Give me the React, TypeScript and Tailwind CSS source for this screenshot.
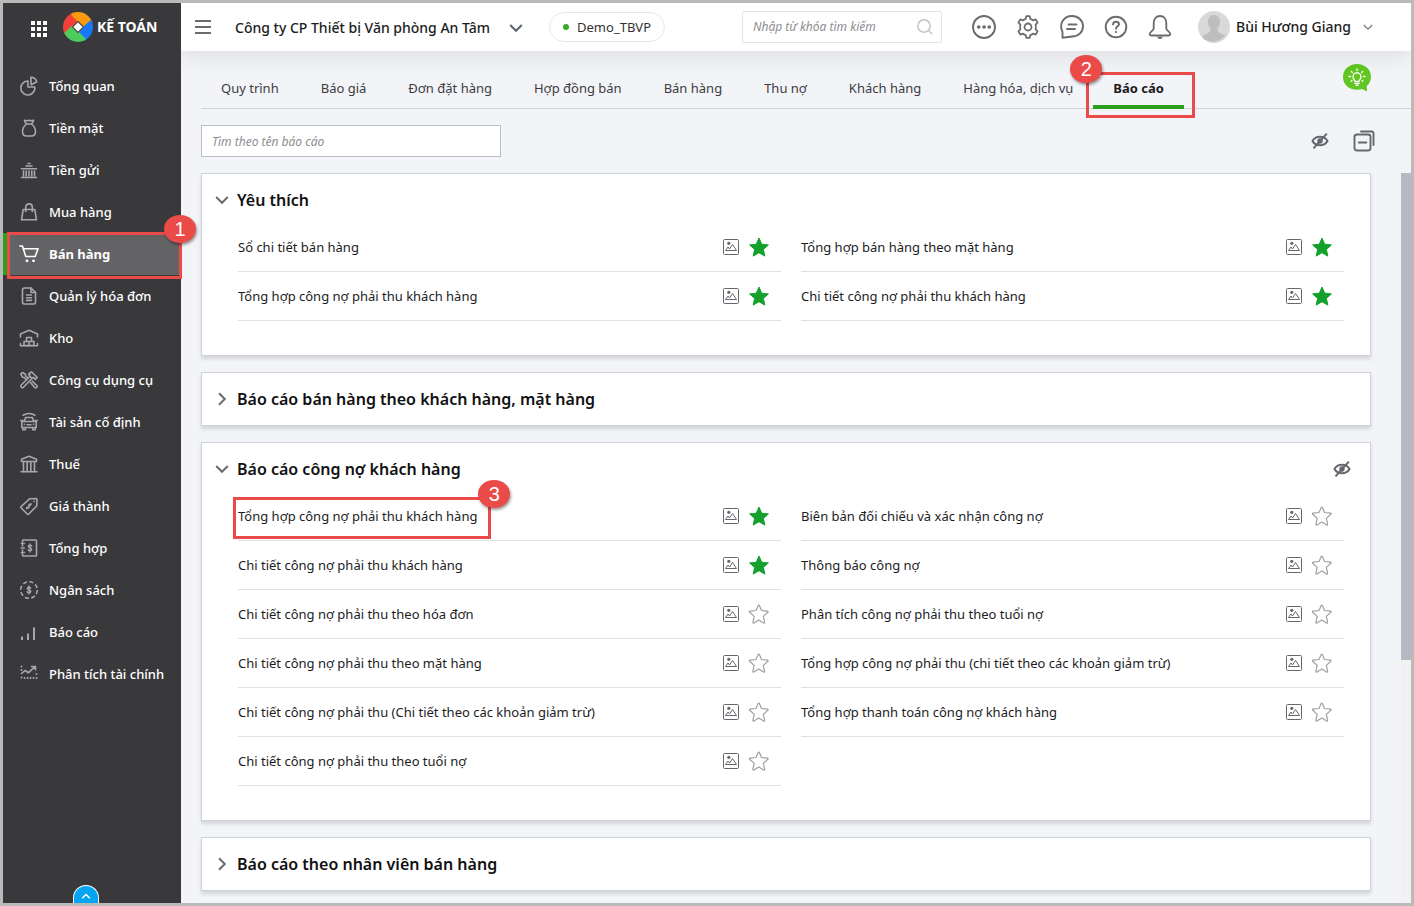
import type { ReactNode } from 'react';

const glyph = 'shrink-0 fill-none stroke-current';

function NavGlyph({ children }: { children: ReactNode }) {
  return (
    <svg viewBox="0 0 20 20" className={`${glyph} size-5`} strokeWidth="1.6" strokeLinecap="round" strokeLinejoin="round" aria-hidden="true">
      {children}
    </svg>
  );
}

function Chevron({ className, direction }: { className: string; direction: 'down' | 'right' | 'up' }) {
  const paths = { down: 'M2.2 5L8 10.800 13.800 5', right: 'M5 2.200L10.800 8 5 13.800', up: 'M3 11l5-5 5 5' };
  return (
    <svg viewBox="0 0 16 16" className={`${glyph} ${className}`} strokeWidth="2" aria-hidden="true">
      <path d={paths[direction]} />
    </svg>
  );
}

const dollar = 'M11.7 8.2c-.3-.8-.9-1-1.7-1-1 0-1.7.4-1.7 1.3 0 2 3.5 1 3.5 2.900 0 .9-.8 1.400-1.800 1.400-.9 0-1.600-.4-1.800-1.100M10 6v8';

const navItems: { label: string; icon: ReactNode }[] = [
  {
    label: 'Tổng quan',
    icon: (
      <>
        <path d="M9 5a7 7 0 1 0 6.700 8.500c.2-.8.200-1.700 0-2.500H9z" />
        <path d="M11.800 1.300a6.500 6.500 0 0 1 6 4.400l-5.600 3z" />
      </>
    ),
  },
  {
    label: 'Tiền mặt',
    icon: (
      <>
        <path d="M7.500 6C6 4.500 5.500 3.500 5.500 2.200c1.500.8 2.500.8 4.500 0 2 .8 3 .8 4.500 0 0 1.300-.5 2.300-2 3.800z" />
        <path d="M7.500 6C5 8 3.500 10.500 3.500 13.200c0 3 1.800 4.800 4 4.800h5c2.200 0 4-1.800 4-4.800 0-2.700-1.500-5.200-4-7.200" />
      </>
    ),
  },
  {
    label: 'Tiền gửi',
    icon: <path d="M9 3.500h2M7 6h6M2.500 8.800h15M4.500 11v5M7.200 11v5M10 11v5M12.800 11v5M15.500 11v5M2.500 17.500h15" />,
  },
  {
    label: 'Mua hàng',
    icon: (
      <>
        <path d="M4.200 7.500h11.600l1.700 10.300h-15z" />
        <path d="M6.700 9.500V5.200a3.300 3.300 0 0 1 6.600 0v4.300" />
      </>
    ),
  },
  {
    label: 'Bán hàng',
    icon: (
      <>
        <path d="M.8 2h2.600l3.400 10.500h9.400L19 4.800H4.300" />
        <circle cx="8" cy="16.800" r="1.400" fill="currentColor" stroke="none" />
        <circle cx="14.500" cy="16.800" r="1.400" fill="currentColor" stroke="none" />
      </>
    ),
  },
  {
    label: 'Quản lý hóa đơn',
    icon: (
      <>
        <path d="M12 2H5.200C4 2 3.500 2.700 3.500 3.700v12.600c0 1 .5 1.700 1.700 1.700h9.600c1.200 0 1.700-.7 1.700-1.700V6.500z" />
        <path d="M12 2v4.500h4.500M7.500 9h5M7.500 11.700h5M7.500 14.400h5" />
      </>
    ),
  },
  {
    label: 'Kho',
    icon: (
      <>
        <path d="M1.500 9V6L10 2.200 18.500 6v3M1.500 17.800h17M1.500 15.500v2.300M18.500 15.500v2.300" />
        <path d="M7.500 9.500h5v4h-5zM5 13.500h5v4H5zM10 13.500h5v4h-5z" />
      </>
    ),
  },
  {
    label: 'Công cụ dụng cụ',
    icon: (
      <>
        <path d="M13.200 8.300l-8.700 8.900a1.500 1.500 0 0 1-2.200-2.200l8.700-8.700M9.500 3.800l3-2 5.700 5.700-1.900 1.900-2-2-1.700.6-2.400-2.500.8-1.200z" />
        <path d="M7.500 10L5.200 7.500l-1.700-.3L1.800 4l1.500-1.500L6.200 4l.5 2 2.300 2.300M11.500 12.500l4.200 5c.7.7 1.400.7 2 0 .7-.6.7-1.300 0-2l-4.500-4.300" />
      </>
    ),
  },
  {
    label: 'Tài sản cố định',
    icon: (
      <>
        <path d="M4 3.200c4-2.200 8-2.200 12 0M5.200 9.500l1.400-4h6.800l1.400 4M2.800 9.500h14.400v6H2.800zM1.800 8.500h2M16.200 8.500h2" />
        <path d="M3.800 15.500v2.300h2.500v-2.300M13.700 15.500v2.300h2.500v-2.300M8 12.800h4M5.300 12.300h.2M14.500 12.300h.2" />
      </>
    ),
  },
  {
    label: 'Thuế',
    icon: (
      <>
        <path d="M2.500 7.500V5.200L10 2.200l7.500 3v2.300zM2 17.700h16" />
        <path d="M4.500 7.500v10M8.200 7.500v10M11.800 7.500v10M15.500 7.500v10" />
      </>
    ),
  },
  {
    label: 'Giá thành',
    icon: (
      <>
        <path d="M10.500 2.800l6.600-.2c.6 0 .9.300.9.900l-.3 6.500-8 8c-.5.500-1 .5-1.500 0l-6-6c-.5-.5-.5-1 0-1.500z" />
        <path d="M15 5.300v.1" />
        <path d="M12 8.800c-1-.9-1.700-.6-2.200 0-.7.900.9 1.700.3 2.700-.5.800-1.500.9-2.500 0M12.200 7.700l-4.700 5.200" strokeWidth="1.300" />
      </>
    ),
  },
  {
    label: 'Tổng hợp',
    icon: (
      <>
        <path d="M3.500 4V2.800c0-.5.300-.8.800-.8h12.400c.5 0 .8.300.8.800v14.400c0 .5-.3.800-.8.800H4.300c-.5 0-.8-.3-.8-.8V16M3.500 7v1M3.500 12v1M2.300 5.500h3M2.300 10h3M2.300 14.500h3" />
        <path d={dollar} strokeWidth="1.300" transform="translate(1 0)" />
      </>
    ),
  },
  {
    label: 'Ngân sách',
    icon: (
      <>
        <circle cx="10" cy="10" r="8.300" strokeDasharray="4.200 2.320" strokeLinecap="butt" />
        <path d={dollar} strokeWidth="1.400" />
      </>
    ),
  },
  {
    label: 'Báo cáo',
    icon: <path d="M3 14.500V18M9 11.500V18M15 5.500V18" strokeWidth="2" strokeLinecap="butt" />,
  },
  {
    label: 'Phân tích tài chính',
    icon: (
      <>
        <path d="M2.500 9.500L6 6.500l3.500 2.200 6.500-6M12.500 2.500h4v3.300" />
        <path d="M2.500 2.500v.1M2.500 6v.1M2.500 13.500v.1M5.500 14h.1M8.500 14h.1M11.500 14h.1M14.500 14h.1M17.500 14h.1M17.500 10v.1" strokeWidth="1.900" />
      </>
    ),
  },
];

const tabs = ['Quy trình', 'Báo giá', 'Đơn đặt hàng', 'Hợp đồng bán', 'Bán hàng', 'Thu nợ', 'Khách hàng', 'Hàng hóa, dịch vụ', 'Báo cáo'];

type Report = { name: string; starred?: boolean; step?: string };
type Section = { title: string; hideable?: boolean; reports?: Report[] };

const sections: Section[] = [
  {
    title: 'Yêu thích',
    reports: [
      { name: 'Sổ chi tiết bán hàng', starred: true },
      { name: 'Tổng hợp bán hàng theo mặt hàng', starred: true },
      { name: 'Tổng hợp công nợ phải thu khách hàng', starred: true },
      { name: 'Chi tiết công nợ phải thu khách hàng', starred: true },
    ],
  },
  { title: 'Báo cáo bán hàng theo khách hàng, mặt hàng' },
  {
    title: 'Báo cáo công nợ khách hàng',
    hideable: true,
    reports: [
      { name: 'Tổng hợp công nợ phải thu khách hàng', starred: true, step: '3' },
      { name: 'Biên bản đối chiếu và xác nhận công nợ' },
      { name: 'Chi tiết công nợ phải thu khách hàng', starred: true },
      { name: 'Thông báo công nợ' },
      { name: 'Chi tiết công nợ phải thu theo hóa đơn' },
      { name: 'Phân tích công nợ phải thu theo tuổi nợ' },
      { name: 'Chi tiết công nợ phải thu theo mặt hàng' },
      { name: 'Tổng hợp công nợ phải thu (chi tiết theo các khoản giảm trừ)' },
      { name: 'Chi tiết công nợ phải thu (Chi tiết theo các khoản giảm trừ)' },
      { name: 'Tổng hợp thanh toán công nợ khách hàng' },
      { name: 'Chi tiết công nợ phải thu theo tuổi nợ' },
    ],
  },
  { title: 'Báo cáo theo nhân viên bán hàng' },
];

function StepMark({ step, className, badgeClassName }: { step: string; className: string; badgeClassName: string }) {
  return (
    <span className={`pointer-events-none absolute z-20 border-3 border-[#ea4a48] ${className}`}>
      <span
        className={`absolute -top-5 flex h-7 w-8 items-center justify-center rounded-[50%] bg-[#ea4a48] font-['Liberation_Sans',sans-serif] text-xl leading-none font-normal text-white shadow-[1px_2px_3px_rgba(0,0,0,0.4)] ${badgeClassName}`}
      >
        {step}
      </span>
    </span>
  );
}

function HiddenEye() {
  return (
    <svg viewBox="0 0 18 18" className={`${glyph} size-[18px]`} strokeWidth="2" aria-hidden="true">
      <path d="M1.500 9C4.500 3.400 13.500 3.400 16.500 9 13.500 14.600 4.500 14.600 1.500 9z" />
      <circle cx="9" cy="9" r="2.700" fill="currentColor" stroke="none" />
      <path d="M2.500 16.300L15.800 1.700" />
    </svg>
  );
}

function PreviewIcon() {
  return (
    <svg viewBox="0 0 16 16" className={`${glyph} size-4`} aria-hidden="true">
      <rect x=".5" y=".5" width="15" height="15" rx="1" />
      <circle cx="5.800" cy="4.300" r="1.600" fill="currentColor" stroke="none" />
      <path d="M2.500 11.500L5 8l1.500 2L9.500 5.500l4 6z" />
    </svg>
  );
}

function StarIcon({ filled }: { filled?: boolean }) {
  return filled ? (
    <svg viewBox="0 0 22 22" className="size-[22px] fill-[#14a02c] stroke-[#14a02c]" strokeWidth="1" strokeLinejoin="round" aria-hidden="true">
      <path d="M11 2l2.700 6.200 6.700.7-5 4.500 1.400 6.700-5.800-3.400-5.800 3.400 1.400-6.700-5-4.500 6.700-.7z" />
    </svg>
  ) : (
    <svg viewBox="0 0 22 22" className="size-[22px] fill-none stroke-[#a0a0a0]" strokeWidth="1.200" strokeLinejoin="round" aria-hidden="true">
      <path d="M10.200 2.600c.3-.7.900-.7 1.200 0l2.100 4.900 5.900.6c.8.100 1 .7.400 1.200l-4.500 4.100 1.300 5.800c.2.800-.3 1.100-1 .7l-4.800-2.900-4.900 2.900c-.7.400-1.200.1-1-.7l1.300-5.800-4.500-4.100c-.6-.5-.4-1.100.4-1.200l5.900-.6z" />
    </svg>
  );
}

function ReportRow({ report }: { report: Report }) {
  return (
    <li className="flex h-[49px] items-center border-b border-[#e0e0e0]">
      <a href="#report" className="relative mr-auto whitespace-nowrap">
        {report.name}
        {report.step && <StepMark step={report.step} className="-top-[9px] -right-[14px] -bottom-[13px] -left-[5px]" badgeClassName="-right-[22px]" />}
      </a>
      <button type="button" aria-label="Xem mẫu" className="text-[#65676c]">
        <PreviewIcon />
      </button>
      <button type="button" aria-label="Yêu thích" aria-pressed={!!report.starred} className="mr-[11px] ml-[9px]">
        <StarIcon filled={report.starred} />
      </button>
    </li>
  );
}

function SectionCard({ section }: { section: Section }) {
  const open = !!section.reports;
  return (
    <section className="border border-[#cfd2d8] bg-white shadow-[0_3px_4px_rgba(0,0,0,0.13)]">
      <div className="flex h-[52px] items-center pr-[19px] pl-3">
        <button type="button" aria-expanded={open} className="flex items-center gap-[7px] text-base font-semibold text-[#111]">
          <Chevron direction={open ? 'down' : 'right'} className="size-4 text-[#6b6b70]" />
          {section.title}
        </button>
        {section.hideable && (
          <button type="button" aria-label="Ẩn nhóm báo cáo" className="ml-auto text-[#65676c]">
            <HiddenEye />
          </button>
        )}
      </div>
      {section.reports && (
        <ul className="-mt-[3px] grid grid-cols-2 gap-x-5 pr-[26px] pb-[34px] pl-9">
          {section.reports.map((report) => (
            <ReportRow key={report.name} report={report} />
          ))}
        </ul>
      )}
    </section>
  );
}

function Sidebar() {
  return (
    <aside className="relative z-20 flex w-[178px] shrink-0 flex-col bg-[#39393c] text-white">
      <div className="flex h-12 shrink-0 items-center pl-7">
        <button type="button" aria-label="Ứng dụng" className="pt-1">
          <svg viewBox="0 0 16 16" className="size-4 fill-white" aria-hidden="true">
            <path d="M0 0h4v4H0zM6 0h4v4H6zM12 0h4v4h-4zM0 6h4v4H0zM6 6h4v4H6zM12 6h4v4h-4zM0 12h4v4H0zM6 12h4v4H6zM12 12h4v4h-4z" />
          </svg>
        </button>
        <a href="#home" className="ml-4 flex items-center gap-1 text-sm font-bold whitespace-nowrap">
          <svg viewBox="0 0 30 30" className="size-[30px]" aria-hidden="true">
            <clipPath id="disc">
              <circle cx="15" cy="15" r="15" />
            </clipPath>
            <g clipPath="url(#disc)">
              <path d="M-1 25V-1h10L20.500 10.500 10 15z" fill="#f5403a" />
              <path d="M7 -2h25v12L20.500 15 9 4z" fill="#fb9a0c" />
              <path d="M31 5v26H22L10 20l10-5z" fill="#1478f8" />
              <path d="M-1 23L9.500 13.500 23 27l-3 5H-1z" fill="#4dcb5c" />
              <path d="M15 9.500l5.500 5.500-5.500 5.500L9.500 15z" fill="#fff" stroke="#4b4b50" strokeWidth="1.200" />
            </g>
          </svg>
          KẾ TOÁN
        </a>
      </div>
      <nav aria-label="Phân hệ" className="pt-[14px]">
        {navItems.map((item) => {
          const active = item.label === 'Bán hàng';
          return (
            <a
              key={item.label}
              href="#module"
              aria-current={active ? 'page' : undefined}
              className={`relative flex h-[42px] items-center gap-[10px] border-l-4 pl-3 text-[13px] whitespace-nowrap ${
                active ? 'border-[#2ca01c] bg-[#636366] font-bold' : 'border-transparent font-medium'
              }`}
            >
              <span className={active ? 'text-white' : 'text-[#a8a8aa]'}>
                <NavGlyph>{item.icon}</NavGlyph>
              </span>
              {item.label}
              {active && <StepMark step="1" className="-top-px -right-px -bottom-[4px] left-0" badgeClassName="-right-[17px]" />}
            </a>
          );
        })}
      </nav>
      <button type="button" aria-label="Thu gọn" className="mt-auto ml-[70px] flex h-[18px] w-[26px] justify-center rounded-t-full border border-b-0 border-white bg-[#03a5f3] pt-1">
        <Chevron direction="up" className="size-3" />
      </button>
    </aside>
  );
}

function Header() {
  return (
    <header className="relative z-10 flex h-12 shrink-0 items-center bg-white pr-[38px] pl-[14px] shadow-[0_4px_24px_rgba(0,0,0,0.1)]">
      <button type="button" aria-label="Menu" className="text-[#6b6b70]">
        <svg viewBox="0 0 16 14" className={`${glyph} h-[14px] w-4`} strokeWidth="2" aria-hidden="true">
          <path d="M0 1h16M0 7h16M0 13h16" />
        </svg>
      </button>
      <button type="button" className="ml-6 flex items-center gap-[18px] pt-0.5 text-sm font-medium whitespace-nowrap">
        Công ty CP Thiết bị Văn phòng An Tâm
        <Chevron direction="down" className="size-4 text-[#5f6570]" />
      </button>
      <span className="ml-[25px] flex h-[30px] items-center gap-2 rounded-full border border-[#e8e8e8] px-[13px] text-[13px] whitespace-nowrap text-[#333]">
        <span className="size-[6px] rounded-full bg-[#3ba52c]" />
        Demo_TBVP
      </span>
      <label className="ml-auto flex h-8 w-[200px] items-center rounded-xs border border-[#e4e4e6] pr-2 pl-[10px]">
        <input type="search" aria-label="Tìm kiếm" placeholder="Nhập từ khóa tìm kiếm" className="min-w-0 flex-1 text-xs outline-none placeholder:text-[#8d8d92] placeholder:italic" />
        <svg viewBox="0 0 16 16" className={`${glyph} size-4 text-[#c5c5c8]`} strokeWidth="1.500" aria-hidden="true">
          <circle cx="7" cy="7" r="6.200" />
          <path d="M11.500 11.500l3.800 3.800" />
        </svg>
      </label>
      <div className="ml-[30px] flex items-center gap-5 text-[#6c6c70]">
        <button type="button" aria-label="Khác">
          <svg viewBox="0 0 24 24" className={`${glyph} size-6`} strokeWidth="1.900" aria-hidden="true">
            <circle cx="12" cy="12" r="11" />
            <path d="M6.700 12h.1M12 12h.1M17.200 12h.1" strokeWidth="3.600" strokeLinecap="round" />
          </svg>
        </button>
        <button type="button" aria-label="Thiết lập">
          <svg viewBox="0 0 24 24" className={`${glyph} size-6`} strokeWidth="1.800" strokeLinejoin="round" aria-hidden="true">
            <path d="M10.300 1.200h3.400l.7 2.700c.9.300 1.700.8 2.400 1.400l2.900-.9 1.900 3.200-2 2c.2.800.2 4 0 4.800l2 2-1.900 3.200-2.900-.9c-.7.6-1.500 1.100-2.400 1.400l-.7 2.700h-3.400l-.7-2.700c-.9-.3-1.700-.8-2.400-1.400l-2.900.9-1.900-3.200 2-2c-.2-.8-.2-4 0-4.800l-2-2 1.900-3.200 2.900.9c.7-.6 1.500-1.100 2.400-1.400z" />
            <circle cx="12" cy="12" r="3.500" />
          </svg>
        </button>
        <button type="button" aria-label="Tin nhắn">
          <svg viewBox="0 0 24 24" className={`${glyph} size-6`} strokeWidth="1.900" strokeLinejoin="round" strokeLinecap="round" aria-hidden="true">
            <path d="M2.500 22.800V17C-1.500 8.500 4 1 12 1c6.300 0 11 4.500 11 10.200 0 6-4.800 10.300-11 10.300z" />
            <path d="M8.500 9.500h8M7 14h8" />
          </svg>
        </button>
        <button type="button" aria-label="Trợ giúp">
          <svg viewBox="0 0 24 24" className={`${glyph} size-6`} strokeWidth="1.900" strokeLinecap="round" aria-hidden="true">
            <circle cx="12" cy="12" r="10.300" />
            <path d="M9 9.300C9.200 7.600 10.400 6.700 12 6.700s3 1 3 2.500c0 2-3 2.300-3 4.500" />
            <path d="M12 17v.1" strokeWidth="2.200" />
          </svg>
        </button>
        <button type="button" aria-label="Thông báo">
          <svg viewBox="0 0 24 24" className={`${glyph} size-6`} strokeWidth="1.800" strokeLinejoin="round" strokeLinecap="round" aria-hidden="true">
            <path d="M12 1c4 0 6.300 3 6.300 7v5.500c0 1.800 4 3.500 4 5.500 0 1-.6 1.500-1.500 1.500H3.200c-.9 0-1.500-.5-1.500-1.500 0-2 4-3.700 4-5.500V8c0-4 2.300-7 6.300-7z" />
            <path d="M10.500 22.300c.8.900 2.200.9 3 0" strokeWidth="2" />
          </svg>
        </button>
      </div>
      <button type="button" className="ml-[26px] flex items-center text-sm font-medium whitespace-nowrap">
        <svg viewBox="0 0 32 32" className="mr-[6px] size-8" aria-hidden="true">
          <circle cx="16" cy="16" r="16" fill="#d9d9d9" />
          <path d="M16 4c4 0 6 3 6 7 0 3-1 5-2.500 6.500.2 3 1 4 3.500 5l4 2A16 16 0 0 1 5 27.500v-3l4-2c2.500-1 3.500-2 3.500-5C11 16 10 14 10 11c0-4 2-7 6-7z" fill="#bebebe" />
        </svg>
        Bùi Hương Giang
        <svg viewBox="0 0 10 10" className={`${glyph} ml-3 size-[10px] text-[#77777b]`} strokeWidth="1.200" aria-hidden="true">
          <path d="M.8 3L5 7.200 9.200 3" />
        </svg>
      </button>
    </header>
  );
}

export default function App() {
  return (
    <div className="flex h-screen overflow-hidden border-3 border-[#bababa] bg-[#f3f4f8] font-['Noto_Sans',sans-serif] text-[13px] leading-5 text-[#1c1c1e]">
      <Sidebar />
      <div className="flex min-w-0 flex-1 flex-col">
        <Header />
        <nav aria-label="Bán hàng" className="ml-5 flex shrink-0 gap-0.5 border-b border-[#cfd2d8] pt-5 pr-[39px]">
          {tabs.map((tab) =>
            tab === 'Báo cáo' ? (
              <a key={tab} href="#tab" aria-current="page" className="relative z-20 -mb-px -ml-0.5 flex h-[38px] items-center border-b-4 border-[#2ca01c] px-5 font-bold whitespace-nowrap">
                {tab}
                <StepMark step="2" className="top-px -right-[11px] -bottom-[13px] -left-[7px]" badgeClassName="-left-[19px]" />
              </a>
            ) : (
              <a key={tab} href="#tab" className="-mb-px flex h-[38px] items-center border-b-4 border-transparent px-5 whitespace-nowrap text-[#3c3c40]">
                {tab}
              </a>
            ),
          )}
          <button type="button" aria-label="Gợi ý" className="-mt-2 mb-auto ml-auto">
            <svg viewBox="0 0 30 30" className="size-[30px]" aria-hidden="true">
              <path d="M15 1c8 0 14 5.500 14 13 0 3.700-1.700 6.700-4.300 9l.3 5.500-5-2.500c-1.500.5-3.300.8-5 .8C7 26.800 1 21.500 1 14S7 1 15 1z" fill="#62c722" />
              <g fill="none" stroke="#fff" strokeWidth="1.300" strokeLinecap="round">
                <path d="M13 18.500c0-1.500-2-2.300-2-4.700a4 4 0 0 1 8 0c0 2.400-2 3.200-2 4.700zM13 20.500h4M14 22.300h2M15 7.500V6M10.300 9.500l-1-1M19.700 9.500l1-1M8.500 13.500H7M21.500 13.500H23M10 17.500l-.8.800M20 17.500l.8.800" />
              </g>
            </svg>
          </button>
        </nav>
        <div className="flex shrink-0 items-center py-4 pr-9 pl-5">
          <input type="text" aria-label="Tìm theo tên báo cáo" placeholder="Tìm theo tên báo cáo" className="h-8 w-[300px] border border-[#babec5] bg-white px-[10px] text-xs outline-none placeholder:text-[#8d8d92] placeholder:italic" />
          <button type="button" aria-label="Hiện báo cáo ẩn" className="mr-6 ml-auto text-[#65676c]">
            <HiddenEye />
          </button>
          <button type="button" aria-label="Thu gọn tất cả" className="text-[#65676c]">
            <svg viewBox="0 0 22 22" className={`${glyph} size-[22px]`} strokeWidth="1.900" strokeLinecap="round" aria-hidden="true">
              <rect x="1.500" y="4.500" width="16" height="16" rx="2.500" />
              <path d="M5.800 12.500h7.500M8 1.500h10.500c1.200 0 2 .8 2 2V15" />
            </svg>
          </button>
        </div>
        <div className="flex min-h-0 flex-1">
          <main className="flex min-w-0 flex-1 flex-col gap-4 overflow-y-auto pr-[30px] pl-5 [scrollbar-width:none] *:shrink-0">
            {sections.map((section) => (
              <SectionCard key={section.title} section={section} />
            ))}
          </main>
          <div aria-hidden="true" className="w-[10px] bg-[#f1f1f1]">
            <div className="h-2/3 bg-[#b6b9c2]" />
          </div>
        </div>
      </div>
    </div>
  );
}
